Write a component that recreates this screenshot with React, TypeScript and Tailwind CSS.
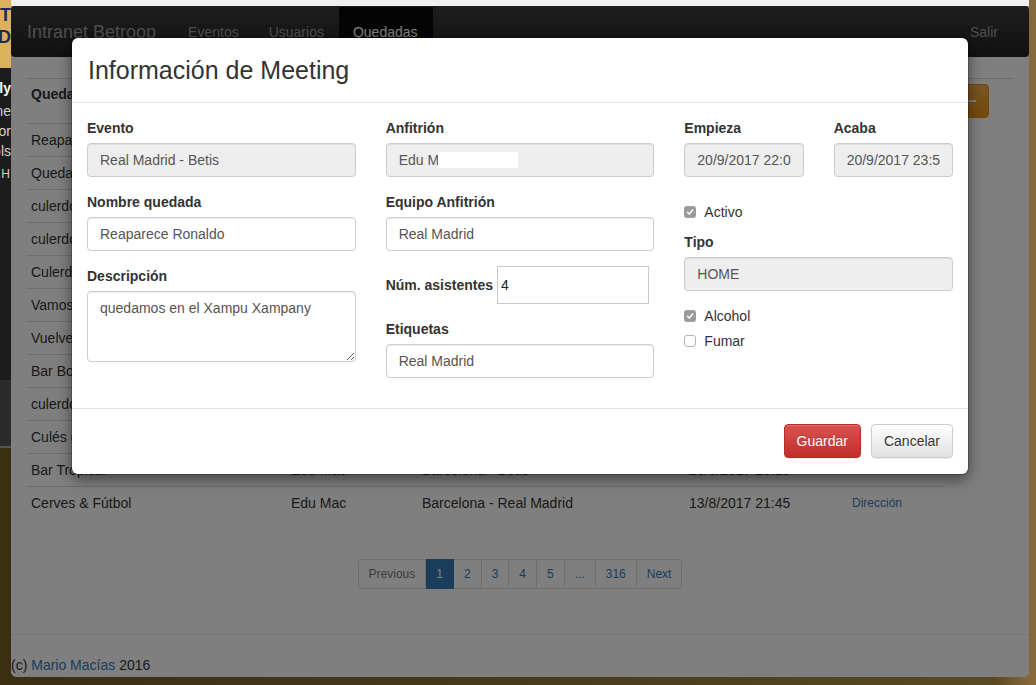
import React from "react";

const rows: string[][] = [
  ["Reaparece Ronaldo", "Edu Mac", "Real Madrid - Betis", "20/9/2017 22:00"],
  ["Quedada Clásico", "Edu Mac", "Real Madrid - Barcelona", "19/9/2017 21:00"],
  ["culerdos en casa", "Edu Mac", "Barcelona - Eibar", "19/9/2017 20:45"],
  ["culerdos 2", "Edu Mac", "Barcelona - Eibar", "19/9/2017 20:45"],
  ["Culerdos Camp Nou", "Edu Mac", "Barcelona - Eibar", "19/9/2017 20:45"],
  ["Vamos Betis", "Edu Mac", "Betis - Deportivo", "16/9/2017 18:30"],
  ["Vuelve la Liga", "Edu Mac", "Barcelona - Espanyol", "9/9/2017 20:45"],
  ["Bar Boadas", "Edu Mac", "Barcelona - Espanyol", "9/9/2017 20:45"],
  ["culerdos 3", "Edu Mac", "Barcelona - Alavés", "26/8/2017 16:15"],
  ["Culés del barrio", "Edu Mac", "Barcelona - Alavés", "26/8/2017 16:15"],
  ["Bar Tropical", "Edu Mac", "Barcelona - Betis", "20/8/2017 20:15"],
  ["Cerves & Fútbol", "Edu Mac", "Barcelona - Real Madrid", "13/8/2017 21:45"],
];

const inputCls =
  "block w-full h-[34px] rounded-[4px] border border-[#ccc] px-[12px] text-[14px] leading-[20px] text-[#555] shadow-[inset_0_1px_1px_rgba(0,0,0,0.075)] outline-none font-['Liberation_Sans',Arial,sans-serif]";

function Label({ children }: { children: React.ReactNode }) {
  return <div className="h-[20px] mb-[5px] text-[14px] leading-[20px] font-bold text-[#333]">{children}</div>;
}

function Field({ label, value, ro }: { label: string; value: string; ro?: boolean }) {
  return (
    <div className="mb-[15px]">
      <Label>{label}</Label>
      <input readOnly value={value} className={`${inputCls} ${ro ? "bg-[#eee]" : "bg-white"}`} />
    </div>
  );
}

function Check({ checked, label, cls }: { checked: boolean; label: string; cls: string }) {
  return (
    <div className={`h-[20px] flex items-center ${cls}`}>
      {checked ? (
        <span className="w-[12px] h-[12px] rounded-[3px] bg-[#9a9a9a] flex items-center justify-center">
          <svg width="12" height="12" viewBox="0 0 12 12">
            <path d="M3.4 6.2 L5.2 8 L8.8 4" fill="none" stroke="#fff" strokeWidth="1.4" strokeLinecap="round" strokeLinejoin="round" />
          </svg>
        </span>
      ) : (
        <span className="w-[12px] h-[12px] rounded-[3px] border border-[#b3b3b3] bg-white" />
      )}
      <span className="ml-[8px] text-[14px] text-[#333]">{label}</span>
    </div>
  );
}

function Modal() {
  return (
    <div className="absolute left-[61px] top-[32px] w-[896px] bg-white rounded-[6px] shadow-[0_0_0_1px_rgba(0,0,0,0.2),0_5px_15px_rgba(0,0,0,0.5)] text-[#333]">
      <div className="h-[65px] border-b border-[#e5e5e5] flex items-center pl-[16px]">
        <div className="text-[25px] font-medium text-[#333] leading-[30px]">Información de Meeting</div>
      </div>
      <div className="grid grid-cols-3 gap-x-[30px] px-[15px] pt-[15px] pb-[15px]">
        <div>
          <Field label="Evento" value="Real Madrid - Betis" ro />
          <Field label="Nombre quedada" value="Reaparece Ronaldo" />
          <div>
            <Label>Descripción</Label>
            <textarea
              readOnly
              defaultValue="quedamos en el Xampu Xampany"
              className="block w-full h-[71px] rounded-[4px] border border-[#ccc] bg-white px-[12px] py-[6px] text-[14px] leading-[20px] text-[#555] shadow-[inset_0_1px_1px_rgba(0,0,0,0.075)] outline-none resize-y font-['Liberation_Sans',Arial,sans-serif]"
            />
          </div>
        </div>
        <div>
          <div className="mb-[15px]">
            <Label>Anfitrión</Label>
            <div className="h-[34px] rounded-[4px] border border-[#ccc] bg-[#eee] px-[12px] flex items-center text-[14px] text-[#555] shadow-[inset_0_1px_1px_rgba(0,0,0,0.075)]">
              <span>Edu M</span>
              <span className="ml-[-1px] w-[80px] h-[16px] bg-white" />
            </div>
          </div>
          <Field label="Equipo Anfitrión" value="Real Madrid" />
          <div className="mb-[15px] h-[38px] flex items-center">
            <span className="text-[14px] font-bold text-[#333]">Núm. asistentes</span>
            <input
              readOnly
              value="4"
              className="ml-[4px] w-[152px] h-[38px] border border-[#c9c9c9] bg-white px-[3px] text-[14px] text-[#222] outline-none font-['Liberation_Sans',Arial,sans-serif]"
            />
          </div>
          <Field label="Etiquetas" value="Real Madrid" />
        </div>
        <div>
          <div className="grid grid-cols-2 gap-x-[30px]">
            <Field label="Empieza" value="20/9/2017 22:00" ro />
            <Field label="Acaba" value="20/9/2017 23:55" ro />
          </div>
          <Check checked label="Activo" cls="mt-[10px] mb-[10px]" />
          <Field label="Tipo" value="HOME" ro />
          <Check checked label="Alcohol" cls="" />
          <Check checked={false} label="Fumar" cls="mt-[5px]" />
        </div>
      </div>
      <div className="border-t border-[#e5e5e5] pt-[15px] pb-[16px] px-[15px] flex justify-end gap-[10px]">
        <button className="h-[34px] px-[12px] rounded-[4px] border border-[#b92c28] bg-[linear-gradient(to_bottom,#d9534f,#c12e2a)] text-white text-[14px] [text-shadow:0_-1px_0_rgba(0,0,0,0.2)] shadow-[inset_0_1px_0_rgba(255,255,255,0.15),0_1px_1px_rgba(0,0,0,0.075)]">
          Guardar
        </button>
        <button className="h-[34px] px-[12px] rounded-[4px] border border-[#ccc] bg-[linear-gradient(to_bottom,#fff,#e0e0e0)] text-[#333] text-[14px] [text-shadow:0_1px_0_#fff] shadow-[inset_0_1px_0_rgba(255,255,255,0.15),0_1px_1px_rgba(0,0,0,0.075)]">
          Cancelar
        </button>
      </div>
    </div>
  );
}

function Page() {
  const pages = ["1", "2", "3", "4", "5", "...", "316"];
  return (
    <div className="relative flex-1 bg-white text-[#333] text-[14px]">
      <div className="h-[51px] rounded-[4px] bg-[linear-gradient(to_bottom,#3c3c3c,#222)] flex items-stretch pt-[1px]">
        <div className="pl-[16px] pr-[17px] flex items-center text-[18px] text-[#9d9d9d]">Intranet Betroop</div>
        <div className="px-[15px] flex items-center text-[#9d9d9d]">Eventos</div>
        <div className="px-[15px] flex items-center text-[#9d9d9d]">Usuarios</div>
        <div className="pl-[14px] pr-[15px] flex items-center text-white bg-[linear-gradient(to_bottom,#080808,#0f0f0f)]">Quedadas</div>
        <div className="ml-auto mr-[16px] px-[15px] flex items-center text-[#9d9d9d]">Salir</div>
      </div>

      <div className="mx-[15px] mt-[21px]">
        <div className="h-[45px] border-t border-[#ddd] flex items-start pt-[5px]">
          <div className="w-[260px] px-[5px] leading-[20px] font-bold">Quedada</div>
          <div className="w-[131px] px-[5px] leading-[20px] font-bold">Anfitrión</div>
          <div className="w-[267px] px-[5px] leading-[20px] font-bold">Evento</div>
          <div className="w-[163px] px-[5px] leading-[20px] font-bold">Fecha</div>
          <button className="ml-auto mr-[25px] h-[34px] px-[12px] rounded-[4px] border border-[#e38d13] bg-[linear-gradient(to_bottom,#f0ad4e,#eb9316)] text-white text-[14px] flex items-center">
            Nueva quedada
            <span className="ml-[6px] w-[8px] h-[2px] bg-white" />
          </button>
        </div>
        {rows.map((r, i) => (
          <div key={i} className="w-[917px] h-[33px] border-t border-[#ddd] flex items-center whitespace-nowrap">
            <div className="w-[260px] px-[5px] overflow-hidden">{r[0]}</div>
            <div className="w-[131px] px-[5px] overflow-hidden">{r[1]}</div>
            <div className="w-[267px] px-[5px] overflow-hidden">{r[2]}</div>
            <div className="w-[163px] px-[5px] overflow-hidden">{r[3]}</div>
            <div className="w-[96px] px-[5px] text-[12px] text-[#337ab7]">Dirección</div>
          </div>
        ))}
        <div className="mt-[40px] flex justify-center">
          <div className="flex text-[12px] leading-[18px]">
            <span className="px-[10px] py-[5px] border border-[#ddd] rounded-l-[3px] text-[#777] bg-white">Previous</span>
            {pages.map((p, i) => (
              <span
                key={i}
                className={
                  p === "1"
                    ? "px-[10px] py-[5px] border-y border-r border-[#337ab7] bg-[#337ab7] text-white"
                    : "px-[10px] py-[5px] border-y border-r border-[#ddd] bg-white text-[#337ab7]"
                }
              >
                {p}
              </span>
            ))}
            <span className="px-[10px] py-[5px] border-y border-r border-[#ddd] rounded-r-[3px] text-[#337ab7] bg-white">Next</span>
          </div>
        </div>
      </div>
      <div className="mt-[45px] border-t border-[#eee]" />
      <div className="mt-[20px] leading-[20px]">
        (c) <span className="text-[#337ab7]">Mario Macías</span> 2016
      </div>

      <div className="absolute inset-0 bg-[rgba(0,0,0,0.5)]" />
      <Modal />
    </div>
  );
}

export default function App() {
  return (
    <div className="relative w-[1036px] h-[685px] overflow-hidden bg-[linear-gradient(90deg,#3a2e13_0%,#4a3b1b_55%,#5b4923_96%,#86693a_99.4%)] font-['Liberation_Sans',Arial,sans-serif]">
      <div className="absolute left-0 top-0 w-[11px] flex flex-col overflow-hidden">
        <div className="h-[68px] bg-[#ddb05c] pt-[4px] text-[#1d2b5c] font-bold text-[18px] leading-[22px]">
          <div className="flex justify-end overflow-hidden whitespace-nowrap">T</div>
          <div className="flex justify-end overflow-hidden whitespace-nowrap">D</div>
        </div>
        <div className="h-[312px] bg-[#1c1c1c] pt-[10px] text-[#d0d0d0] text-[14px] leading-[20px]">
          <div className="flex justify-end overflow-hidden whitespace-nowrap font-bold text-white">Only</div>
          <div className="flex justify-end overflow-hidden whitespace-nowrap mt-[3px]">Home</div>
          <div className="flex justify-end overflow-hidden whitespace-nowrap">Editor</div>
          <div className="flex justify-end overflow-hidden whitespace-nowrap">Tools</div>
          <div className="flex justify-end overflow-hidden whitespace-nowrap mt-[3px] text-[12px] tracking-[1px]">SEARCH</div>
        </div>
        <div className="h-[66px] bg-[#2b2b2b]" />
        <div className="h-[2px] bg-[#555]" />
      </div>
      <div className="absolute left-[11px] top-0 w-[1018px] h-[677px] rounded-b-[6px] overflow-hidden flex flex-col">
        <div className="h-[6px] bg-[#efefef]" />
        <Page />
      </div>
    </div>
  );
}
